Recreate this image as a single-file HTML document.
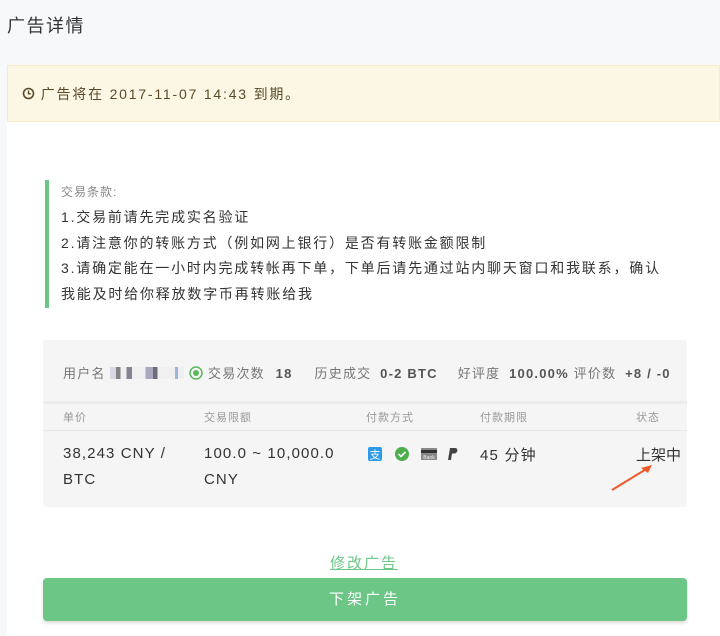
<!DOCTYPE html>
<html><head><meta charset="utf-8"><style>
*{margin:0;padding:0;box-sizing:border-box}
body{width:720px;height:636px;overflow:hidden;background:#f7f8fa;font-family:"Liberation Sans","Noto Sans CJK SC",sans-serif;color:#333;position:relative}
.abs{position:absolute;white-space:nowrap}
</style></head><body>
<div class="abs" style="left:7px;top:12px;font-size:18px;color:#333;letter-spacing:1.5px;">广告详情</div>
<div class="abs" style="left:7px;top:65px;width:713px;height:57px;background:#fbf7e4;border:1px solid #f5ecc8;"></div>
<div class="abs" style="left:22px;top:84px;font-size:14px;color:#5a4a2a;letter-spacing:1.8px;"><svg width="13" height="13" viewBox="0 0 13 13" style="vertical-align:-1px"><circle cx="6.5" cy="6.5" r="5" fill="none" stroke="#5a4a2a" stroke-width="1.6"/><path d="M6.5 3.5V6.8H8.8" fill="none" stroke="#5a4a2a" stroke-width="1.4"/></svg> 广告将在 2017-11-07 14:43 到期。</div>
<div class="abs" style="left:7px;top:122px;width:713px;height:514px;background:#fff;"></div>
<div class="abs" style="left:45px;top:180px;width:4px;height:128px;background:#6cc787;"></div>
<div class="abs" style="left:61px;top:183px;font-size:12px;color:#888;letter-spacing:1px;">交易条款:</div>
<div class="abs" style="left:61px;top:205px;font-size:14px;line-height:25.5px;color:#333;letter-spacing:1.8px;">1.交易前请先完成实名验证<br>2.请注意你的转账方式（例如网上银行）是否有转账金额限制<br>3.请确定能在一小时内完成转帐再下单，下单后请先通过站内聊天窗口和我联系，确认<br>我能及时给你释放数字币再转账给我</div>
<div class="abs" style="left:43px;top:340px;width:644px;height:167px;background:#f5f5f5;border-radius:3px;"></div>
<div class="abs" style="left:43px;top:401px;width:644px;height:3px;background:#ececec;"></div>
<div class="abs" style="left:43px;top:430px;width:644px;height:1px;background:#e8e8e8;"></div>
<div class="abs" style="left:63px;top:363px;font-size:13px;color:#777;letter-spacing:1.2px;">用户名 <span style="display:inline-block;width:74px;height:12px;background:linear-gradient(90deg,#ccd 0 8%,#000a 8% 14%,#eee 14% 22%,#556 22% 30%,#eee 30% 48%,#88a 48% 58%,#334 58% 64%,#eee 64% 88%,#79c 88% 92%,#eee 92%);vertical-align:-1px;opacity:.7"></span> <svg width="14" height="14" viewBox="0 0 14 14" style="vertical-align:-2px"><circle cx="7" cy="7" r="6" fill="none" stroke="#5cb85c" stroke-width="1.5"/><circle cx="7" cy="7" r="3" fill="#5cb85c"/></svg> 交易次数 <b style="color:#555;margin-left:6px">18</b><span style="margin-left:22px">历史成交</span> <b style="color:#555;margin-left:4px">0-2 BTC</b><span style="margin-left:20px">好评度</span> <b style="color:#555;margin-left:4px">100.00%</b> 评价数 <b style="color:#555;margin-left:4px">+8 / -0</b></div>
<div class="abs" style="left:63px;top:409px;font-size:11px;color:#999;letter-spacing:1px;">单价</div>
<div class="abs" style="left:204px;top:409px;font-size:11px;color:#999;letter-spacing:1px;">交易限额</div>
<div class="abs" style="left:366px;top:409px;font-size:11px;color:#999;letter-spacing:1px;">付款方式</div>
<div class="abs" style="left:480px;top:409px;font-size:11px;color:#999;letter-spacing:1px;">付款期限</div>
<div class="abs" style="left:636px;top:409px;font-size:11px;color:#999;letter-spacing:1px;">状态</div>
<div class="abs" style="left:63px;top:441px;font-size:15px;line-height:26px;color:#333;letter-spacing:1.1px;">38,243 CNY /<br>BTC</div>
<div class="abs" style="left:204px;top:441px;font-size:15px;line-height:26px;color:#333;letter-spacing:1.1px;">100.0 ~ 10,000.0<br>CNY</div>
<div class="abs" style="left:368px;top:446px;">
<svg width="92" height="16" viewBox="0 0 92 16"><rect x="0" y="1" width="14" height="14" rx="2" fill="#2d9ae8"/><text x="7" y="12.5" font-size="11" fill="#fff" text-anchor="middle" font-family="Noto Sans CJK SC">支</text><circle cx="34" cy="8" r="7" fill="#4cae4c"/><path d="M30.5 8l2.5 2.5 4.5-4.5" stroke="#fff" stroke-width="1.6" fill="none"/><rect x="53" y="2" width="16" height="12" fill="#888"/><rect x="53" y="4" width="16" height="3" fill="#333"/><text x="61" y="13" font-size="5" fill="#eee" text-anchor="middle">Bank</text><path d="M80 14l2-12h5c3 0 3.5 4 0 5.5h-3l-1 6.5z" fill="#444"/></svg></div>
<div class="abs" style="left:480px;top:444px;font-size:15px;color:#333;letter-spacing:1.2px;">45 分钟</div>
<div class="abs" style="left:636px;top:444px;font-size:15px;color:#333;">上架中</div>
<svg class="abs" style="left:610px;top:462px" width="45" height="30" viewBox="0 0 45 30"><path d="M2 28L38 6" stroke="#ee5a2a" stroke-width="2"/><path d="M42 3L31 6L38 11z" fill="#ee5a2a"/></svg>
<div class="abs" style="left:330px;top:552px;font-size:15px;color:#6cc787;text-decoration:underline;letter-spacing:2px;">修改广告</div>
<div class="abs" style="left:43px;top:578px;width:644px;height:43px;background:#6cc787;border-radius:4px;box-shadow:0 2px 3px rgba(0,0,0,.15);color:#fff;font-size:15px;text-align:center;line-height:43px;letter-spacing:3px;">下架广告</div>
</body></html>
